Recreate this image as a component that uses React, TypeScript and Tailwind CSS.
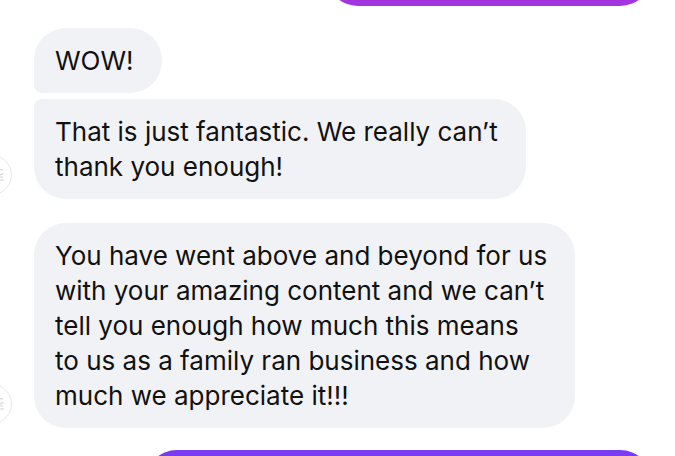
function Avatar() {
  return (
    <div className="ml-[-62px] mr-[22px] mb-[4px] flex h-[40px] w-[40px] shrink-0 items-center justify-end rounded-full border border-gray-200 bg-white pr-[6px]">
      <svg width="12" height="16" viewBox="0 0 12 16" fill="none" stroke="#d4d4d8" strokeWidth="1.2">
        <path d="M10 3 C6 2 3 4 4 7 C5 9 9 8 10 6" />
        <path d="M2 10 H10 M4 13 H11" />
      </svg>
    </div>
  );
}

function Bubble({ lines, corners }: { lines: string[]; corners: string }) {
  return (
    <div
      className={`w-fit whitespace-nowrap bg-[#f1f2f5] pl-[21px] pr-[28px] py-[15px] text-[26px] leading-[35px] text-[#111] ${corners}`}
    >
      {lines.map((l, i) => (
        <div key={i}>{l}</div>
      ))}
    </div>
  );
}

export default function App() {
  return (
    <div
      className="h-[456px] w-[675px] overflow-hidden bg-white"
      style={{ fontFamily: "Inter, 'Noto Sans', sans-serif" }}
    >
      <div className="flex flex-col">
        <div className="ml-[326px] mt-[-60px] h-[66px] w-[326px] rounded-[32px] bg-[#a235de]" />

        <div className="mt-[22px] flex flex-col gap-[6px] pl-[34px]">
          <Bubble lines={["WOW!"]} corners="rounded-[32px] rounded-bl-[8px]" />
          <div className="flex items-end">
            <Avatar />
            <Bubble
              lines={["That is just fantastic. We really can’t", "thank you enough!"]}
              corners="rounded-[32px] rounded-tl-[8px]"
            />
          </div>
        </div>

        <div className="mt-[24px] flex items-end pl-[34px]">
          <Avatar />
          <Bubble
            lines={[
              "You have went above and beyond for us",
              "with your amazing content and we can’t",
              "tell you enough how much this means",
              "to us as a family ran business and how",
              "much we appreciate it!!!",
            ]}
            corners="rounded-[32px]"
          />
        </div>

        <div className="ml-[145px] mt-[22px] h-[66px] w-[507px] rounded-[32px] bg-[#7a3cf2]" />
      </div>
    </div>
  );
}
